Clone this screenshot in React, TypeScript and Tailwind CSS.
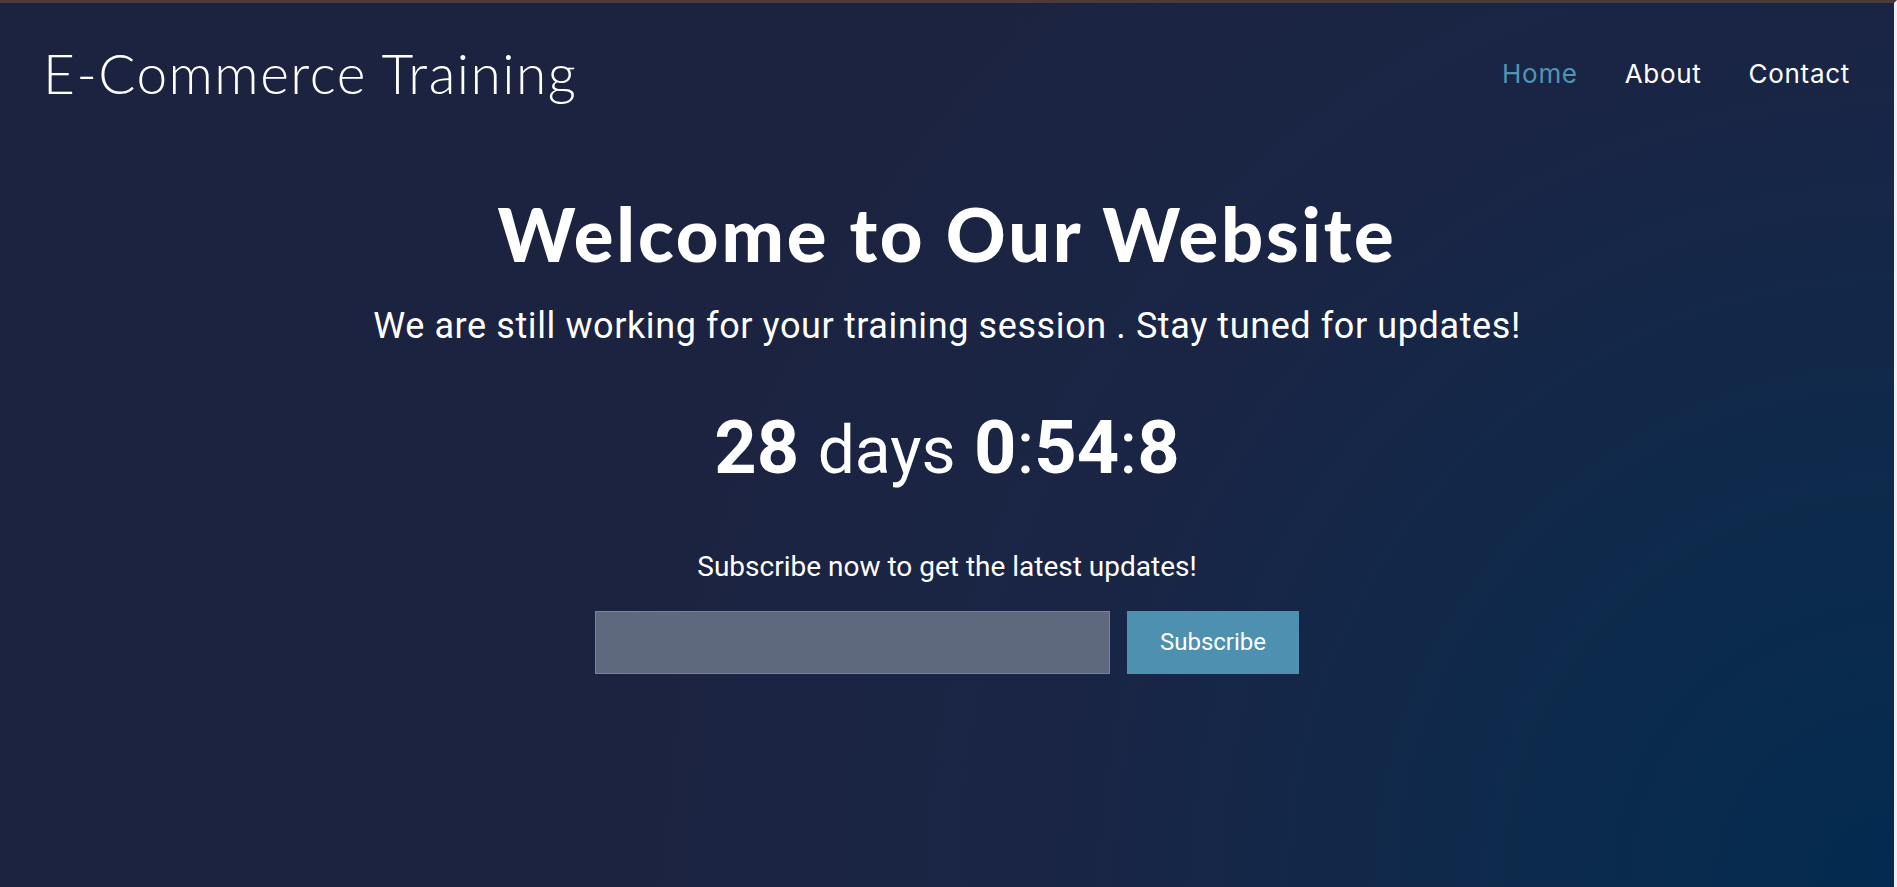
import { useState } from "react";

export default function App() {
    const [email, setEmail] = useState("");

    return (
        <div className="min-h-[887px] w-full bg-[#1c2341] border-t-[3px] border-t-[#4b3b3c] border-r-[3px] border-r-[#eef0f2] bg-[radial-gradient(circle_at_100%_100%,#022b4f_0%,#0d2a4c_18%,#1a2545_40%,#1c2341_62%)] text-white font-['Roboto',sans-serif]">
            <header className="h-[140px] flex items-center justify-between pl-[43px] pr-[44px]">
                <h1 className="font-['Lato',sans-serif] font-light text-[55px] leading-none tracking-[1.5px]">
                    E-Commerce Training
                </h1>
                <nav className="flex items-center gap-[47px] font-['Inter',sans-serif] text-[26px] tracking-[0.7px]">
                    <a href="#" className="text-[#4f95b6]">Home</a>
                    <a href="#" className="text-white">About</a>
                    <a href="#" className="text-white">Contact</a>
                </nav>
            </header>

            <main className="flex flex-col items-center text-center">
                <h2 className="mt-[47px] font-['Lato',sans-serif] font-black text-[74px] leading-[1.2] tracking-[2.8px]">
                    Welcome to Our Website
                </h2>
                <p className="mt-[26px] text-[36px] leading-[1.2] tracking-[0.6px]">
                    We are still working for your training session . Stay tuned for updates!
                </p>
                <div className="mt-[56px] text-[74px] leading-[1.2] h-[90px]">
                    <span className="font-bold">28</span> <span className="text-[66px]">days</span> <span className="font-bold">0</span>:<span className="font-bold">54</span>:<span className="font-bold">8</span>
                </div>
                <p className="mt-[56px] text-[28px] leading-[1.2]">
                    Subscribe now to get the latest updates!
                </p>
                <form className="mt-[27px] flex gap-[17px]" onSubmit={(e) => e.preventDefault()}>
                    <input
                        type="email"
                        value={email}
                        onChange={(e) => setEmail(e.target.value)}
                        className="w-[515px] h-[63px] bg-[#5f697e] border border-[#7b8396] px-4 text-[22px] text-white outline-none"
                    />
                    <button type="submit" className="w-[172px] h-[63px] bg-[#4d90b0] text-[24px] text-white">
                        Subscribe
                    </button>
                </form>
            </main>
        </div>
    );
}
